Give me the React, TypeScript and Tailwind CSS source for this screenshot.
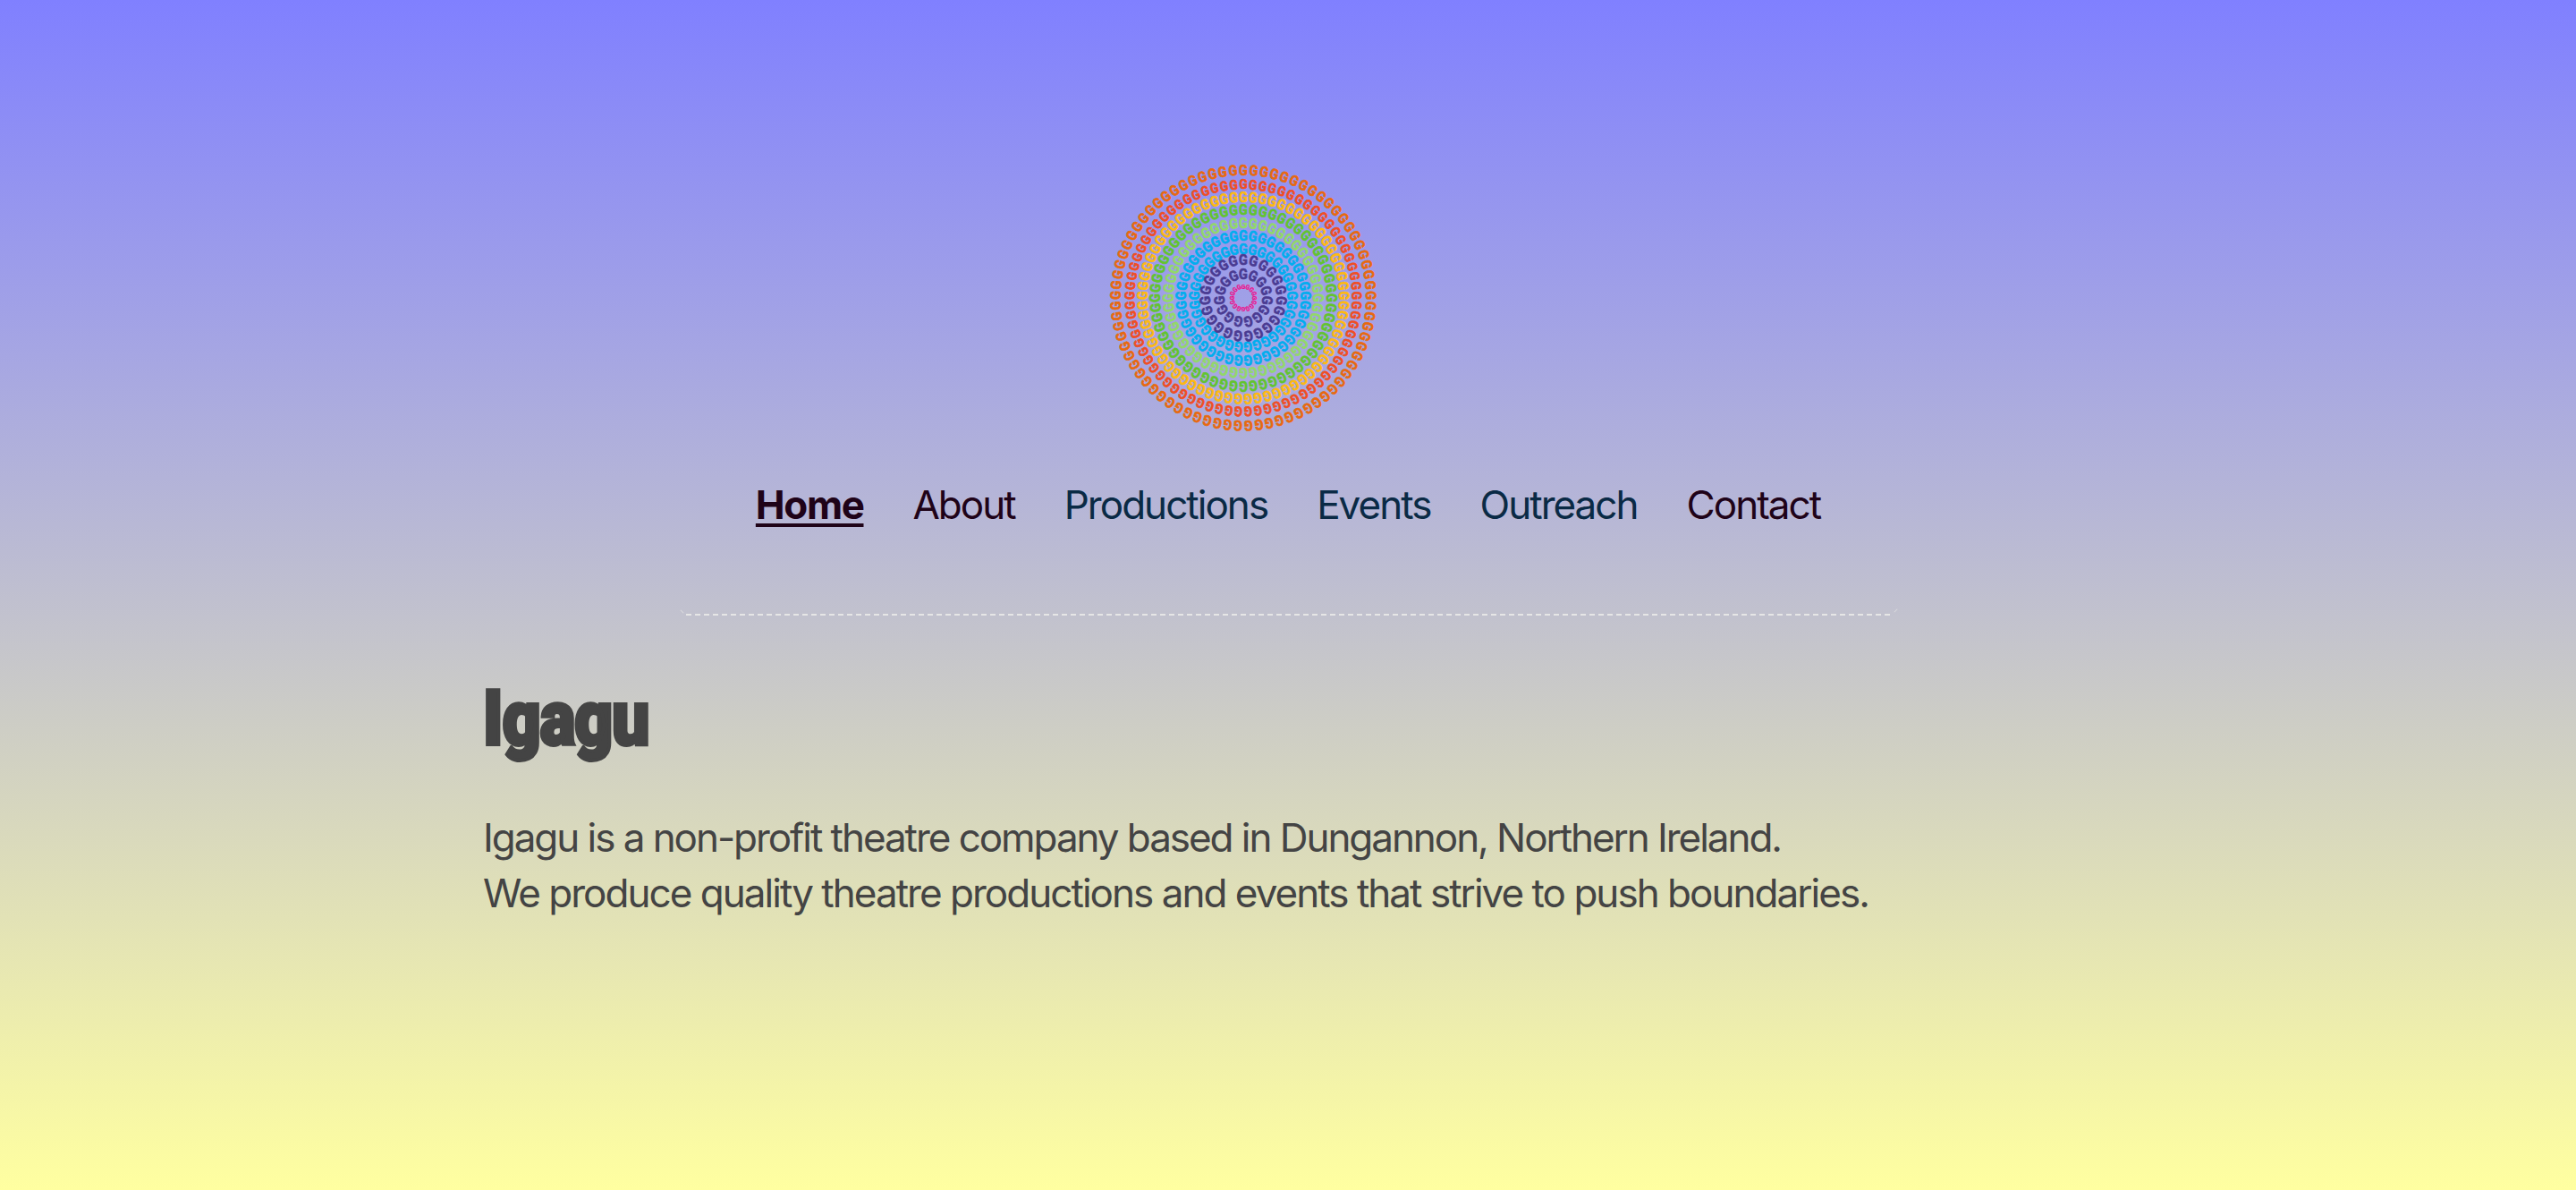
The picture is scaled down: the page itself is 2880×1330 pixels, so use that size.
const rings = [
  { r: 143, n: 77, size: 16, color: '#e8690f' },
  { r: 127, n: 73, size: 15, color: '#f04e23' },
  { r: 113, n: 65, size: 16, color: '#fdb913' },
  { r: 99, n: 56, size: 16, color: '#62c42f' },
  { r: 84, n: 48, size: 16, color: '#92d86a' },
  { r: 70, n: 41, size: 16, color: '#00aeef' },
  { r: 55, n: 33, size: 16, color: '#00aeef' },
  { r: 43, n: 23, size: 16, color: '#4a3b92' },
  { r: 27, n: 15, size: 16, color: '#4a3b92' },
  { r: 13, n: 16, size: 7.5, color: '#ec108c' },
]

function Logo() {
  return (
    <svg viewBox="-150 -150 300 300" className="h-[300px] w-[300px] overflow-visible">
      {rings.map((ring, i) => (
        <g
          key={i}
          fill={ring.color}
          stroke={ring.color}
          strokeWidth={ring.size > 10 ? 0.7 : 0.25}
          fontSize={ring.size}
          fontWeight={700}
          textAnchor="middle"
          style={{ fontFamily: 'Roboto, sans-serif' }}
        >
          {Array.from({ length: ring.n }).map((_, j) => (
            <text key={j} transform={`rotate(${(j * 360) / ring.n}) translate(0 ${-ring.r + ring.size * 0.36}) scale(0.9 1)`}>
              G
            </text>
          ))}
        </g>
      ))}
    </svg>
  )
}

const links = [
  { label: 'Home', color: 'text-[#1f0318]', active: true },
  { label: 'About', color: 'text-[#1f0318]' },
  { label: 'Productions', color: 'text-[#0a2a45]' },
  { label: 'Events', color: 'text-[#0a2a45]' },
  { label: 'Outreach', color: 'text-[#0a2a45]' },
  { label: 'Contact', color: 'text-[#1f0318]' },
]

export default function App() {
  return (
    <div className="min-h-[1330px] bg-linear-to-b/srgb from-[#8080ff] to-[#ffffa0] font-['Inter',sans-serif]">
      <div className="mx-auto w-[1800px] pt-[183px]">
        <div className="flex justify-center pr-[100px]">
          <Logo />
        </div>
        <nav className="mt-[53px] flex justify-center gap-[55px] text-[44px] leading-[56px] tracking-[-1.97px]">
          {links.map((link) => (
            <a
              key={link.label}
              className={`${link.color} ${link.active ? 'font-bold tracking-[-1.4px] underline decoration-4 underline-offset-[5px]' : ''}`}
            >
              {link.label}
            </a>
          ))}
        </nav>
        <div className="relative mx-auto mt-[94px] w-[1350px]">
          <div className="mx-auto h-[2px] w-[1346px] bg-[repeating-linear-gradient(to_right,#e6e6e6_0_6px,transparent_6px_10px)]" />
          <div className="absolute top-[-5px] left-[-3px] h-[5px] w-px -rotate-45 bg-[#e6e6e6]/70" />
          <div className="absolute top-[-6px] right-[-5px] h-[5px] w-px rotate-45 bg-[#e6e6e6]/70" />
        </div>
        <h1 className="mt-[60px] origin-left scale-x-[0.866] font-['Roboto',sans-serif] text-[86px] leading-[110px] font-black tracking-[-1px] text-[#444444] [-webkit-text-stroke:4px_#444444]">
          Igagu
        </h1>
        <p className="mt-[47px] text-[44px] leading-[62px] tracking-[-1.97px] text-[#444444]">
          <span className="tracking-[-2.05px]">Igagu is a non-profit theatre company based in Dungannon, Northern Ireland.</span>
          <br />
          We produce quality theatre productions and events that strive to push boundaries.
        </p>
      </div>
    </div>
  )
}
